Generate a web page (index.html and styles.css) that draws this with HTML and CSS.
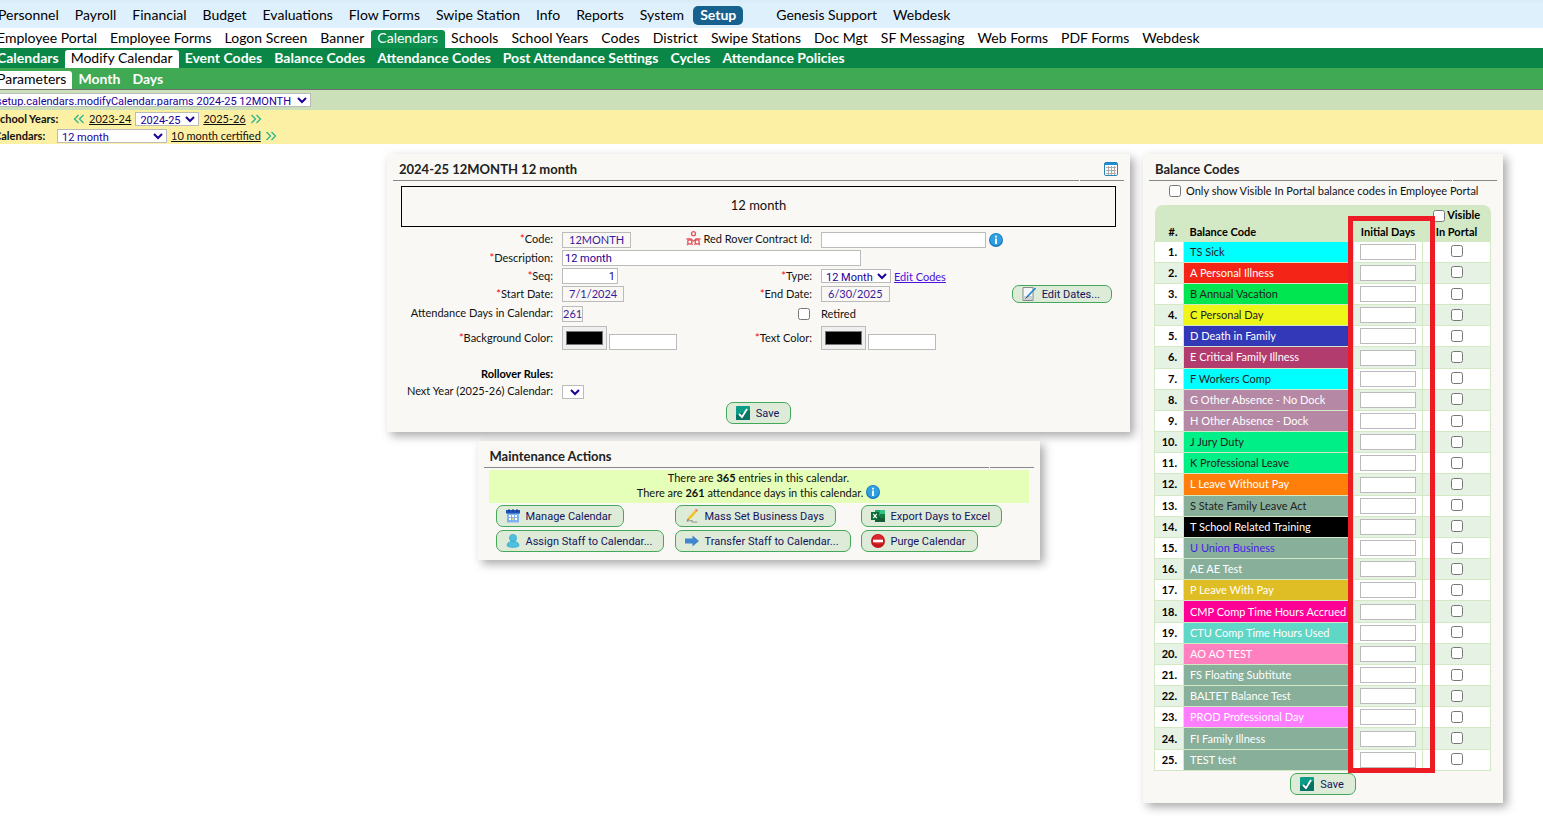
FILE: index.html
```html
<!DOCTYPE html>
<html lang="en">
<head>
  <meta charset="UTF-8">
  <meta name="viewport" content="width=device-width, initial-scale=1.0">
  <title>Modify Calendar</title>
  <link rel="stylesheet" href="styles.css">
</head>
<body>

<!-- Shared icons -->
<svg class="sprite" aria-hidden="true">
  <symbol id="icon-check" viewBox="0 0 14 14">
    <rect width="14" height="14" rx="1" fill="#0b9c88"/>
    <path d="M0 9L14 4V14H0z" fill="#077365"/>
    <path d="M3 8l3 3 5-8" fill="none" stroke="#fff" stroke-width="1.8"/>
  </symbol>
  <symbol id="icon-info" viewBox="0 0 14 14">
    <circle cx="7" cy="7" r="7" fill="#1877bd"/>
    <circle cx="7" cy="6.4" r="6" fill="#2f9fe0"/>
    <path d="M6.1 5.6h1.8V11H6.1zM6.1 2.8h1.8v1.7H6.1z" fill="#fff"/>
  </symbol>
  <symbol id="icon-prev" viewBox="0 0 12 10">
    <path d="M5.5 1L1.5 5l4 4M10.5 1l-4 4 4 4" fill="none" stroke="#2cb58e" stroke-width="1.3"/>
  </symbol>
  <symbol id="icon-next" viewBox="0 0 12 10">
    <path d="M1.5 1l4 4-4 4M6.5 1l4 4-4 4" fill="none" stroke="#2cb58e" stroke-width="1.3"/>
  </symbol>
</svg>

<header class="header">
  <nav class="nav nav-main">
    <a href="#">Personnel</a>
    <a href="#">Payroll</a>
    <a href="#">Financial</a>
    <a href="#">Budget</a>
    <a href="#">Evaluations</a>
    <a href="#">Flow Forms</a>
    <a href="#">Swipe Station</a>
    <a href="#">Info</a>
    <a href="#">Reports</a>
    <a href="#">System</a>
    <a href="#" class="active">Setup</a>
    <a href="#" class="nav-support">Genesis Support</a>
    <a href="#">Webdesk</a>
  </nav>
  <nav class="nav nav-setup">
    <a href="#">Employee Portal</a>
    <a href="#">Employee Forms</a>
    <a href="#">Logon Screen</a>
    <a href="#">Banner</a>
    <a href="#" class="active">Calendars</a>
    <a href="#">Schools</a>
    <a href="#">School Years</a>
    <a href="#">Codes</a>
    <a href="#">District</a>
    <a href="#">Swipe Stations</a>
    <a href="#">Doc Mgt</a>
    <a href="#">SF Messaging</a>
    <a href="#">Web Forms</a>
    <a href="#">PDF Forms</a>
    <a href="#">Webdesk</a>
  </nav>
  <nav class="nav nav-calendars">
    <a href="#">Calendars</a>
    <a href="#" class="active">Modify Calendar</a>
    <a href="#">Event Codes</a>
    <a href="#">Balance Codes</a>
    <a href="#">Attendance Codes</a>
    <a href="#">Post Attendance Settings</a>
    <a href="#">Cycles</a>
    <a href="#">Attendance Policies</a>
  </nav>
  <nav class="nav nav-modify">
    <a href="#" class="active">Parameters</a>
    <a href="#">Month</a>
    <a href="#">Days</a>
  </nav>

  <div class="history-bar">
    <select class="history-select" aria-label="Recent screens">
      <option>setup.calendars.modifyCalendar.params 2024-25 12MONTH</option>
    </select>
  </div>

  <div class="filter-bar">
    <div class="filter-row">
      <label class="years-label" for="schoolYear">School Years:</label>
      <svg class="arrows"><use href="#icon-prev"/></svg>
      <a href="#">2023-24</a>
      <select id="schoolYear" class="year-select"><option>2024-25</option></select>
      <a href="#">2025-26</a>
      <svg class="arrows"><use href="#icon-next"/></svg>
    </div>
    <div class="filter-row">
      <label class="calendars-label" for="calendar">Calendars:</label>
      <select id="calendar" class="calendar-select"><option>12 month</option></select>
      <a href="#">10 month certified</a>
      <svg class="arrows"><use href="#icon-next"/></svg>
    </div>
  </div>
</header>

<main class="content">
  <div class="left-column">

    <!-- Calendar parameters -->
    <section class="panel params-panel">
      <div class="panel-title">
        <h2>2024-25 12MONTH 12 month</h2>
        <div class="panel-tools">
          <svg class="icon" viewBox="0 0 14 14">
            <rect x=".5" y=".5" width="13" height="13" rx="1.5" fill="#fff" stroke="#2583b8"/>
            <path d="M1 1h12v2H1z" fill="#1c8fd6"/>
            <path d="M2 5.5h10M2 8.5h10M2 11.5h10M4.5 4v9M7.5 4v9M10.5 4v9" stroke="#aaa"/>
          </svg>
        </div>
      </div>

      <div class="calendar-name">12 month</div>

      <form class="params-form">
        <span class="label"><b>*</b>Code:</span>
        <div class="field"><span class="readonly">12MONTH</span></div>
        <label class="label" for="redRover">
          <svg class="icon-rover" viewBox="0 0 15 15" fill="none" stroke="#e4525a" stroke-width="1.3">
            <circle cx="7.5" cy="2.7" r="2"/>
            <path d="M.5 8h4c1.500 0 2 2 3 2s1.500-2 3-2h4"/>
            <circle cx="3.8" cy="11" r="2.1"/>
            <circle cx="11.2" cy="11" r="2.1"/>
            <path d="M1 14l1.500-1.500M14 14l-1.500-1.500M5.500 12.500L6.500 14M9.500 12.500L8.500 14"/>
          </svg>
          Red Rover Contract Id:
        </label>
        <div class="field">
          <input type="text" id="redRover" class="input-rover">
          <svg class="icon"><use href="#icon-info"/></svg>
        </div>

        <label class="label" for="description"><b>*</b>Description:</label>
        <div class="field field-wide"><input type="text" id="description" class="input-description" value="12 month"></div>

        <label class="label" for="seq"><b>*</b>Seq:</label>
        <div class="field"><input type="text" id="seq" class="input-seq" value="1"></div>
        <label class="label" for="type"><b>*</b>Type:</label>
        <div class="field">
          <select id="type" class="type-select"><option>12 Month</option></select>
          <a href="#">Edit Codes</a>
        </div>

        <span class="label"><b>*</b>Start Date:</span>
        <div class="field"><span class="readonly">7/1/2024</span></div>
        <span class="label"><b>*</b>End Date:</span>
        <div class="field">
          <span class="readonly">6/30/2025</span>
          <button type="button" class="button button-dates">
            <svg class="icon" viewBox="0 0 14 14">
              <path d="M1 .5h10v13H1z" fill="#f4f6f8" stroke="#888"/>
              <path d="M2 9h8v4H2z" fill="#cdd2d6"/>
              <path d="M13.5 1L5 10" stroke="#2789c8" stroke-width="1.8"/>
              <path d="M5.5 9.5L3.5 11.5" stroke="#444"/>
            </svg>
            Edit Dates...
          </button>
        </div>

        <span class="label">Attendance Days in Calendar:</span>
        <div class="field"><span class="readonly readonly-tight">261</span></div>
        <div class="label"><input type="checkbox" id="retired"></div>
        <div class="field"><label for="retired">Retired</label></div>

        <label class="label" for="backgroundColor"><b>*</b>Background Color:</label>
        <div class="field field-color">
          <input type="color" id="backgroundColor" value="#000000">
          <input type="text" class="input-color" aria-label="Background color code">
        </div>
        <label class="label" for="textColor"><b>*</b>Text Color:</label>
        <div class="field field-color">
          <input type="color" id="textColor" value="#000000">
          <input type="text" class="input-color" aria-label="Text color code">
        </div>

        <h3 class="label rollover">Rollover Rules:</h3>

        <label class="label next-label" for="nextYear">Next Year (2025-26) Calendar:</label>
        <div class="field next-field"><select id="nextYear" class="next-select"><option></option></select></div>
      </form>

      <div class="panel-buttons">
        <button type="button" class="button button-save"><svg class="icon"><use href="#icon-check"/></svg>Save</button>
      </div>
    </section>

    <!-- Maintenance actions -->
    <section class="panel actions-panel">
      <div class="panel-title">
        <h2>Maintenance Actions</h2>
        <div class="panel-tools"></div>
      </div>
      <div class="summary">
        <p>There are <b>365</b> entries in this calendar.</p>
        <p>There are <b>261</b> attendance days in this calendar. <svg class="icon"><use href="#icon-info"/></svg></p>
      </div>
      <div class="actions">
        <button type="button" class="button">
          <svg class="icon" viewBox="0 0 14 14">
            <path d="M1 3h12v10.5H1z" fill="#7fb2f0"/>
            <path d="M0 1h14v3.5H0z" fill="#1d52b8"/>
            <path d="M3 0v3M7 0v3M11 0v3" stroke="#12347c"/>
            <path d="M3 6h2v2H3zM6 6h2v2H6zM9 6h2v2H9zM3 9h2v2H3zM9 9h2v2H9z" fill="#fff"/>
            <path d="M6 9h2v2H6z" fill="#f0d264"/>
          </svg>
          Manage Calendar
        </button>
        <button type="button" class="button">
          <svg class="icon" viewBox="0 0 14 16">
            <path d="M12 1.5L3 11.5" stroke="#f2c321" stroke-width="2.8"/>
            <path d="M13 .5L11.5 2.2" stroke="#ef7da0" stroke-width="3"/>
            <path d="M3.8 12.2L1 14l1-3z" fill="#8a5a20"/>
            <path d="M1 14c4-1 8-1 6 0s1 1 6 1" fill="none" stroke="#888"/>
          </svg>
          Mass Set Business Days
        </button>
        <button type="button" class="button">
          <svg class="icon" viewBox="0 0 14 14">
            <path d="M4 1h10v12H4z" fill="#21a366"/>
            <path d="M9 1h5v4H9z" fill="#33c481"/>
            <path d="M4 7h10v6H4z" fill="#185c37"/>
            <path d="M9 5h5v4H9z" fill="#107c41"/>
            <path d="M0 3h8v8H0z" fill="#0d6b38"/>
            <path d="M2.2 4.8l3.6 4.4M5.8 4.8L2.2 9.2" stroke="#fff" stroke-width="1.2"/>
          </svg>
          Export Days to Excel
        </button>
        <button type="button" class="button">
          <svg class="icon" viewBox="0 0 14 14">
            <path d="M1 11.5c0-2.500 2-3.500 4-4h4c2 .5 4 1.500 4 4 0 2.500-12 2.500-12 0z" fill="#4cc0de" stroke="#339fc0" stroke-width=".6"/>
            <circle cx="7" cy="4" r="3.6" fill="#4cc0de" stroke="#339fc0" stroke-width=".6"/>
          </svg>
          Assign Staff to Calendar...
        </button>
        <button type="button" class="button">
          <svg class="icon" viewBox="0 0 14 14"><path d="M0 4.5h7.500V1.500L14 7l-6.500 5.500v-3H0z" fill="#3f86cc"/></svg>
          Transfer Staff to Calendar...
        </button>
        <button type="button" class="button">
          <svg class="icon" viewBox="0 0 14 14">
            <circle cx="7" cy="7" r="7" fill="#c4161c"/>
            <circle cx="7" cy="5.5" r="5" fill="#d9292e"/>
            <path d="M2 5.7h10v2.600H2z" fill="#fff"/>
          </svg>
          Purge Calendar
        </button>
      </div>
    </section>
  </div>

  <!-- Balance codes -->
  <section class="panel balance-panel">
    <div class="panel-title">
      <h2>Balance Codes</h2>
      <div class="panel-tools"></div>
    </div>
    <div class="portal-only">
      <input type="checkbox" id="portalOnly">
      <label for="portalOnly">Only show Visible In Portal balance codes in Employee Portal</label>
    </div>
    <div class="table-wrap">
      <table class="balance-table">
        <thead>
          <tr>
            <th class="col-number">#.</th>
            <th class="col-code">Balance Code</th>
            <th class="col-days">Initial Days</th>
            <th class="col-portal">
              <input type="checkbox" id="allVisible"> <label for="allVisible">Visible<br>In Portal</label>
            </th>
          </tr>
        </thead>
        <tbody id="balanceRows"></tbody>
      </table>
      <div class="highlight"></div>
    </div>
    <div class="panel-buttons">
      <button type="button" class="button button-save"><svg class="icon"><use href="#icon-check"/></svg>Save</button>
    </div>
  </section>
</main>

<script src="script.js"></script>
</body>
</html>
```
FILE: styles.css
```css
* {
  box-sizing: border-box;
}

body {
  margin: 0;
  font-family: Lato, "Liberation Sans", sans-serif;
  font-size: 11px;
  line-height: 15px;
  color: #111;
  background-color: #fff;
  overflow-x: hidden;
}

h2, h3, p {
  margin: 0;
}

input, select, button {
  font-family: Roboto, Arial, sans-serif;
  font-size: 11px;
  color: #1b0099;
  margin: 0;
}

input[type="text"], select {
  border: 1px solid #bbb;
  border-radius: 0;
  background-color: #fff;
}

input[type="text"] {
  height: 16px;
  padding: 0 2px;
}

select {
  height: 14px;
  padding: 0;
}

input[type="checkbox"] {
  width: 12px;
  height: 12px;
}

.sprite {
  display: none;
}

.icon {
  width: 14px;
  height: 14px;
  flex: none;
}

/* Navigation */
.header {
  margin-left: -9px;
}

.nav {
  display: flex;
  align-items: flex-end;
  font-size: 14px;
  line-height: 16px;
  white-space: nowrap;
}

.nav a {
  color: #000;
  text-decoration: none;
  padding: 0 7px 2px;
}

.nav-main {
  height: 28px;
  align-items: center;
  gap: 2px;
  padding-top: 2px;
  background: linear-gradient(#d8ebf5, #dff0fd 4px);
}

.nav-main a {
  padding: 1px 7px 2px;
}

.nav-main .active {
  background-color: #17618e;
  color: #fff;
  font-weight: bold;
  border-radius: 5px;
}

.nav-main .nav-support {
  margin-left: 24px;
}

.nav-setup {
  height: 20px;
}

.nav-setup a {
  padding: 0 7px 2px 6px;
}

.nav-setup .active {
  background-color: #0c8f4c;
  color: #fff;
  border-radius: 3px 3px 0 0;
}

.nav-calendars {
  height: 20px;
  background-color: #0a8746;
}

.nav-modify {
  height: 22px;
  background-color: #40a953;
  border-bottom: 1px solid #6f6f6f;
}

.nav-calendars a, .nav-modify a {
  padding: 0 6px 2px;
  color: #fff;
  font-weight: bold;
}

.nav-calendars .active, .nav-modify .active {
  background-color: #fff;
  color: #000;
  font-weight: normal;
  border-radius: 3px 3px 0 0;
}

.history-bar {
  display: flex;
  align-items: center;
  height: 20px;
  background-color: #cbe0b8;
}

.history-select {
  width: 320px;
}

.filter-bar {
  height: 34px;
  padding-left: 3px;
  background-color: #fbf0a4;
}

.filter-row {
  display: flex;
  align-items: center;
  gap: 4px;
  height: 17px;
}

.filter-row label {
  font-weight: bold;
}

.filter-row a {
  color: #111;
}

.years-label {
  width: 75px;
}

.calendars-label {
  width: 59px;
}

.arrows {
  width: 12px;
  height: 10px;
}

.year-select {
  width: 64px;
}

.calendar-select {
  width: 110px;
}

/* Panels */
.content {
  display: flex;
  justify-content: flex-end;
  align-items: flex-start;
  gap: 13px;
  padding: 10px 40px 16px 0;
}

.left-column {
  display: flex;
  flex-direction: column;
  align-items: center;
  gap: 9px;
}

.panel {
  padding: 5px 6px 8px;
  background-color: #f9f8f4;
  box-shadow: 4px 4px 9px #aaa;
}

.panel-title {
  display: flex;
  gap: 1px;
}

.panel-title h2 {
  flex: 1;
  height: 22px;
  padding-left: 6px;
  border-bottom: 1px solid #888;
  font-size: 13px;
  line-height: 20px;
  color: #222;
}

.panel-tools {
  width: 44px;
  height: 22px;
  padding: 3px 6px 0 0;
  border-bottom: 1px solid #888;
  text-align: right;
}

.panel-buttons {
  display: flex;
  justify-content: center;
  padding-top: 2px;
}

.button {
  display: inline-flex;
  align-items: center;
  gap: 6px;
  height: 22px;
  padding: 0 11px 0 9px;
  border: 1px solid #43a85a;
  border-radius: 7px;
  background-color: #deebd8;
  color: #14145e;
  white-space: nowrap;
}

/* Calendar parameters */
.params-panel {
  width: 743px;
}

.calendar-name {
  margin: 5px 8px 3px;
  padding: 9px 10px 11px;
  border: 1px solid #000;
  font-size: 13px;
  line-height: 19px;
  text-align: center;
}

.params-form {
  display: grid;
  grid-template-columns: 160px 82px 159px 1fr;
  grid-template-rows: 19px 18px 18px 18px 21px 28px 14px 17px 17px;
  column-gap: 9px;
  align-items: center;
}

.label {
  padding-bottom: 2px;
  text-align: right;
  white-space: nowrap;
}

.label b {
  color: #f00;
  font-weight: normal;
}

.label input {
  vertical-align: middle;
  margin-right: 2px;
}

.field {
  display: flex;
  align-items: center;
  gap: 3px;
}

.field-wide {
  grid-column: span 3;
}

.field a {
  color: #4b10e0;
}

.readonly {
  padding: 0 6px;
  border: 1px solid #bbb;
  line-height: 14px;
  color: #3a1a9c;
}

.readonly-tight {
  padding: 0;
}

.icon-rover {
  width: 15px;
  height: 15px;
  vertical-align: bottom;
}

.input-rover {
  width: 165px;
}

.input-description {
  width: 299px;
}

.input-seq {
  width: 56px;
  text-align: right;
}

.type-select {
  width: 70px;
}

.button-dates {
  height: 18px;
  margin-left: auto;
  margin-right: 12px;
}

input[type="color"] {
  width: 45px;
  height: 24px;
  padding: 0;
  border: 1px solid #bbb;
  background-color: #efefef;
  flex: none;
}

input[type="color"]::-webkit-color-swatch-wrapper {
  padding: 4px 3px;
}

.field-color {
  gap: 2px;
  align-items: flex-end;
}

.input-color {
  width: 68px;
  flex: none;
}

.rollover {
  grid-row: 8;
  font-size: 11px;
  color: #000;
}

.next-label {
  grid-row: 9;
  grid-column: 1;
}

.next-field {
  grid-row: 9;
  grid-column: 2;
}

.next-select {
  width: 22px;
}

/* Maintenance actions */
.actions-panel {
  width: 562px;
}

.summary {
  margin: 2px 5px;
  padding-bottom: 3px;
  background-color: #e5ffb8;
  text-align: center;
}

.summary .icon {
  vertical-align: top;
}

.actions {
  display: grid;
  grid-template-columns: 179px 186px 1fr;
  row-gap: 3px;
  padding: 0 12px;
  justify-items: start;
}

/* Balance codes */
.balance-panel {
  width: 360px;
}

.portal-only {
  display: flex;
  align-items: center;
  gap: 5px;
  padding: 2px 20px 7px;
  white-space: nowrap;
}

.table-wrap {
  position: relative;
  margin: 0 6px 0 5px;
}

.balance-table {
  width: 100%;
  height: 566px;
  table-layout: fixed;
  border-collapse: collapse;
}

.balance-table th {
  height: 36px;
  padding: 0 6px 2px;
  background-color: #d3e8c5;
  text-align: left;
  vertical-align: bottom;
  white-space: nowrap;
  color: #000;
}

.balance-table th:first-child {
  border-top-left-radius: 8px;
}

.balance-table th:last-child {
  border-top-right-radius: 8px;
}

.balance-table td {
  padding: 0 6px;
  border: 1px solid #d3e8c5;
  background-color: #fff;
  line-height: 14px;
  white-space: nowrap;
}

.balance-table tr:nth-child(even) td {
  background-color: #e6f2e4;
}

.balance-table .number {
  font-weight: bold;
  text-align: right;
  color: #000;
}

.balance-table .visible {
  text-align: center;
}

.balance-table input {
  vertical-align: middle;
}

.balance-table input[type="text"] {
  width: 56px;
}

.balance-table input[type="checkbox"] {
  margin-bottom: 2px;
}

.balance-table .col-number {
  width: 29px;
  text-align: right;
}

.balance-table .col-code {
  width: 170px;
}

.balance-table .col-days {
  width: 69px;
  padding-left: 0;
  padding-right: 0;
  text-align: center;
}

.balance-table .col-portal {
  padding-left: 0;
  padding-right: 0;
  text-align: center;
}

.highlight {
  position: absolute;
  top: 11px;
  bottom: -2px;
  left: 194px;
  width: 87px;
  border: 5px solid #ed1c24;
  pointer-events: none;
}
```
FILE: script.js
```js
const balanceCodes = [
  { name: "TS Sick", background: "#00ffff", color: "#222222" },
  { name: "A Personal Illness", background: "#f42516", color: "#ffffff" },
  { name: "B Annual Vacation", background: "#00e651", color: "#222222" },
  { name: "C Personal Day", background: "#eef619", color: "#222222" },
  { name: "D Death in Family", background: "#3338b8", color: "#ffffff" },
  { name: "E Critical Family Illness", background: "#b33c6e", color: "#ffffff" },
  { name: "F Workers Comp", background: "#00ffff", color: "#222222" },
  { name: "G Other Absence - No Dock", background: "#b589a6", color: "#ffffff" },
  { name: "H Other Absence - Dock", background: "#b589a6", color: "#ffffff" },
  { name: "J Jury Duty", background: "#00ef87", color: "#222222" },
  { name: "K Professional Leave", background: "#00ef87", color: "#222222" },
  { name: "L Leave Without Pay", background: "#ff7f0a", color: "#ffffff" },
  { name: "S State Family Leave Act", background: "#87af9a", color: "#222222" },
  { name: "T School Related Training", background: "#000000", color: "#ffffff" },
  { name: "U Union Business", background: "#87af9a", color: "#4b1de8" },
  { name: "AE AE Test", background: "#87af9a", color: "#ffffff" },
  { name: "P Leave With Pay", background: "#dfbd24", color: "#ffffff" },
  { name: "CMP Comp Time Hours Accrued", background: "#ff0097", color: "#ffffff" },
  { name: "CTU Comp Time Hours Used", background: "#60d6c7", color: "#ffffff" },
  { name: "AO AO TEST", background: "#ff80bf", color: "#ffffff" },
  { name: "FS Floating Subtitute", background: "#87af9a", color: "#ffffff" },
  { name: "BALTET Balance Test", background: "#87af9a", color: "#ffffff" },
  { name: "PROD Professional Day", background: "#ff7dff", color: "#ffffff" },
  { name: "FI Family Illness", background: "#87af9a", color: "#ffffff" },
  { name: "TEST test", background: "#87af9a", color: "#ffffff" }
];

const balanceRows = document.getElementById("balanceRows");

balanceCodes.forEach((code, index) => {
  const row = document.createElement("tr");
  row.innerHTML = `
    <td class="number">${index + 1}.</td>
    <td style="background-color: ${code.background}; color: ${code.color}">${code.name}</td>
    <td><input type="text" aria-label="Initial days for ${code.name}"></td>
    <td class="visible"><input type="checkbox" aria-label="${code.name} visible in portal"></td>
  `;
  balanceRows.appendChild(row);
});
```
